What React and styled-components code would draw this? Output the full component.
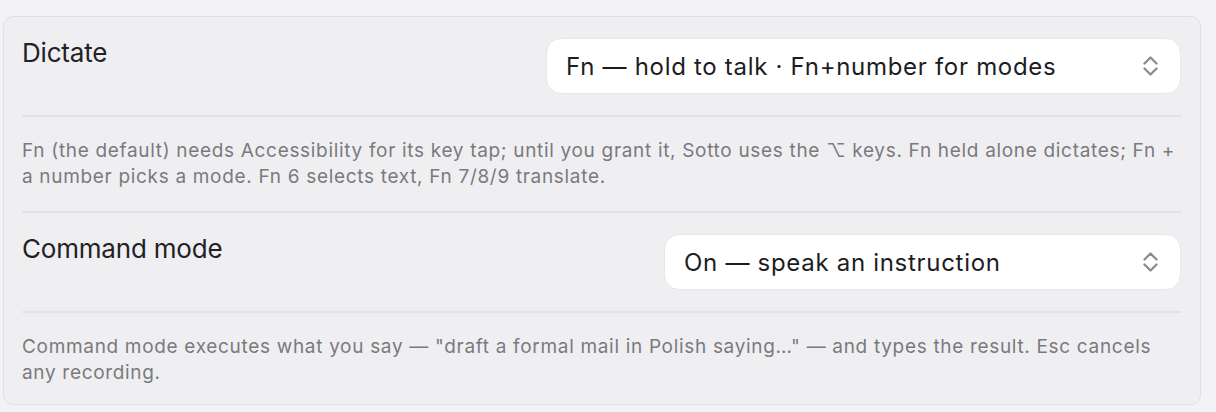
import React from "react";
import styled, { createGlobalStyle } from "styled-components";

const Global = createGlobalStyle`
  html, body { margin: 0; padding: 0; background: #f3f3f5; }
  body { font-family: Inter, "Noto Sans", "Liberation Sans", sans-serif; -webkit-font-smoothing: antialiased; }
`;

const Page = styled.div`
  padding: 16px 15px 7px 3px;
`;

const Card = styled.section`
  background: #efeff2;
  border: 1px solid #e1e1e4;
  border-radius: 10px;
  padding: 21px 19px 18px 18px;
  display: flex;
  flex-direction: column;
`;

const Row = styled.div`
  display: flex;
  justify-content: space-between;
  align-items: flex-start;
`;

const Label = styled.div`
  font-size: 26px;
  line-height: 28px;
  margin-top: 1px;
  color: #222224;
  letter-spacing: -0.2px;
`;

const Select = styled.div`
  box-sizing: border-box;
  width: ${(p) => p.$width}px;
  height: 56px;
  background: #ffffff;
  border: 1px solid #e7e7ea;
  border-radius: 15px;
  display: flex;
  align-items: center;
  justify-content: space-between;
  padding: 0 22px 0 19px;
  font-size: 24px;
  color: #1d1d1f;
  letter-spacing: 0.7px;
`;

const Divider = styled.div`
  height: 2px;
  background: #e3e3e6;
  margin: 21px 0;
`;

const Desc = styled.p`
  margin: 0;
  font-size: 19px;
  line-height: 26px;
  color: #7a7a7e;
  letter-spacing: 0.68px;
`;

const Chevrons = () => (
  <svg width="15" height="20" viewBox="0 0 15 20" fill="none">
    <path d="M1.5 7.5 L7.5 1.5 L13.5 7.5" stroke="#8b8b90" strokeWidth="2.3" strokeLinecap="round" strokeLinejoin="round" />
    <path d="M1.5 12.5 L7.5 18.5 L13.5 12.5" stroke="#8b8b90" strokeWidth="2.3" strokeLinecap="round" strokeLinejoin="round" />
  </svg>
);

export default function App() {
  return (
    <>
      <Global />
      <Page>
        <Card>
          <Row>
            <Label>Dictate</Label>
            <Select $width={635}>
              <span>Fn — hold to talk · Fn+number for modes</span>
              <Chevrons />
            </Select>
          </Row>
          <Divider />
          <Desc>
            Fn (the default) needs Accessibility for its key tap; until you grant it, Sotto uses the ⌥ keys. Fn held alone dictates; Fn + a number picks a mode. Fn 6 selects text, Fn 7/8/9 translate.
          </Desc>
          <Divider />
          <Row>
            <Label>Command mode</Label>
            <Select $width={517}>
              <span>On — speak an instruction</span>
              <Chevrons />
            </Select>
          </Row>
          <Divider />
          <Desc>
            Command mode executes what you say — "draft a formal mail in Polish saying…" — and types the result. Esc cancels any recording.
          </Desc>
        </Card>
      </Page>
    </>
  );
}
